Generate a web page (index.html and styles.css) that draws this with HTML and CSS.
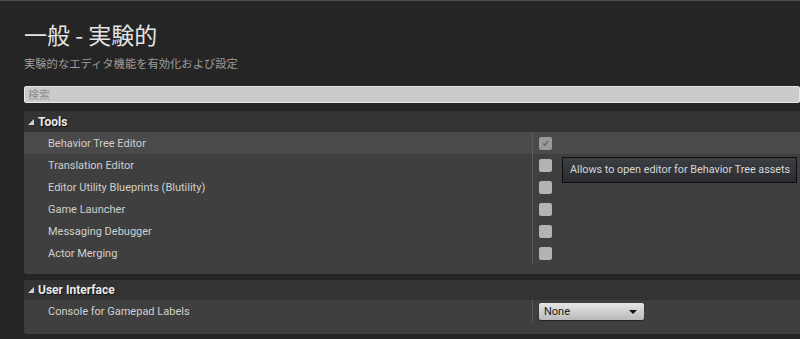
FILE: index.html
```html
<!DOCTYPE html>
<html lang="ja">
<head>
    <meta charset="UTF-8">
    <title>一般 - 実験的</title>
    <link rel="stylesheet" href="styles.css">
</head>
<body>
    <div class="page">
        <h1>一般 - 実験的</h1>
        <p class="subtitle">実験的なエディタ機能を有効化および設定</p>

        <div class="search">
            <input type="text" placeholder="検索">
        </div>

        <div class="section">
            <div class="section-head"><span class="arrow"></span>Tools</div>
            <div class="section-body">
                <div class="row hover">
                    <div class="name">Behavior Tree Editor</div>
                    <div class="value"><span class="check checked">&#10004;</span></div>
                </div>
                <div class="row">
                    <div class="name">Translation Editor</div>
                    <div class="value"><span class="check"></span></div>
                </div>
                <div class="row">
                    <div class="name">Editor Utility Blueprints (Blutility)</div>
                    <div class="value"><span class="check"></span></div>
                </div>
                <div class="row">
                    <div class="name">Game Launcher</div>
                    <div class="value"><span class="check"></span></div>
                </div>
                <div class="row">
                    <div class="name">Messaging Debugger</div>
                    <div class="value"><span class="check"></span></div>
                </div>
                <div class="row">
                    <div class="name">Actor Merging</div>
                    <div class="value"><span class="check"></span></div>
                </div>
            </div>
        </div>

        <div class="section">
            <div class="section-head small"><span class="arrow"></span>User Interface</div>
            <div class="section-body">
                <div class="row tall">
                    <div class="name">Console for Gamepad Labels</div>
                    <div class="value">
                        <div class="combo">None<span class="combo-arrow"></span></div>
                    </div>
                </div>
            </div>
        </div>

        <div class="tooltip">Allows to open editor for Behavior Tree assets</div>
    </div>
</body>
</html>
```

FILE: styles.css
```css
html, body {
    margin: 0;
    height: 100%;
}
body {
    background-color: #252525;
    border-top: 1px solid #4e4e4e;
    box-sizing: border-box;
    overflow: hidden;
    font-family: Roboto, "Noto Sans CJK JP", sans-serif;
    color: #c8c8c8;
}
.page {
    position: relative;
    padding: 17px 0 0 24px;
}
h1 {
    margin: 0;
    font-family: "Noto Sans CJK JP", sans-serif;
    font-size: 23px;
    font-weight: normal;
    line-height: 32px;
    color: #e4e4e4;
}
.subtitle {
    margin: 5px 0 0 0;
    font-family: "Noto Sans CJK JP", sans-serif;
    font-size: 11.3px;
    line-height: 16px;
    color: #9c9c9c;
}
.search {
    margin-top: 13px;
    height: 17px;
}
.search input {
    box-sizing: border-box;
    width: 100%;
    height: 17px;
    margin: 0;
    padding: 0 0 0 3px;
    border: 1px solid #e8e8e8;
    border-radius: 2px;
    background-color: #cbcbcb;
    font-family: "Noto Sans CJK JP", sans-serif;
    font-size: 11px;
    outline: none;
}
.search input::placeholder {
    color: #8e8e8e;
}
.section {
    margin-top: 10px;
    border-radius: 3px 0 0 3px;
    overflow: hidden;
}
.section + .section {
    margin-top: 6px;
}
.section-head {
    display: flex;
    align-items: center;
    height: 21px;
    background-color: #333333;
    font-size: 12px;
    font-weight: bold;
    color: #eaeaea;
    text-shadow: 1px 1px 0 #111;
}
.section-head.small {
    height: 20px;
}
.arrow {
    width: 0;
    height: 0;
    margin: 0 4px 0 4px;
    border-left: 6px solid transparent;
    border-bottom: 6px solid #d0d0d0;
}
.section-body {
    background-color: #3f3f3f;
    padding-bottom: 10px;
}
.row {
    display: flex;
    height: 22px;
    align-items: stretch;
}
.row.tall {
    height: 23px;
    padding-bottom: 1px;
}
.row.hover {
    background-color: #4a4a4a;
}
.name {
    width: 509px;
    padding-left: 24px;
    box-sizing: border-box;
    display: flex;
    align-items: center;
    font-size: 11px;
    color: #cfcfcf;
    border-right: 1px solid #5b5b5b;
}
.value {
    flex: 1;
    display: flex;
    align-items: center;
    padding-left: 6px;
}
.check {
    width: 13px;
    height: 13px;
    border-radius: 2px;
    background-color: #b3b3b3;
    font-size: 10px;
    line-height: 13px;
    text-align: center;
    color: #6c6c6c;
}
.check.checked {
    background-color: #9a9a9a;
}
.combo {
    box-sizing: border-box;
    display: flex;
    align-items: center;
    justify-content: space-between;
    width: 105px;
    height: 17px;
    padding: 0 7px 0 5px;
    border-radius: 2px;
    background: linear-gradient(#e6e6e6, #bababa);
    box-shadow: 0 1px 1px #222;
    font-size: 11px;
    color: #202020;
}
.combo-arrow {
    width: 0;
    height: 0;
    border-left: 4px solid transparent;
    border-right: 4px solid transparent;
    border-top: 4px solid #111;
}
.tooltip {
    position: absolute;
    left: 562px;
    top: 156px;
    width: 235px;
    height: 26px;
    box-sizing: border-box;
    border: 1px solid #0e0e0e;
    background: linear-gradient(#3b3e43, #2a2c30);
    padding-left: 7px;
    font-size: 10.8px;
    line-height: 24px;
    color: #d6d6d6;
    white-space: nowrap;
}
```
